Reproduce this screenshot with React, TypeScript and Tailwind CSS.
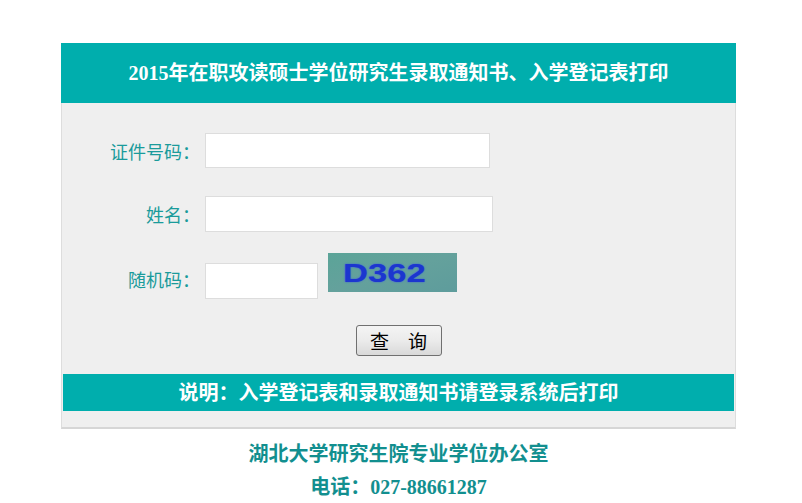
import React from "react";

const serif = { fontFamily: '"Liberation Serif", "Noto Sans CJK SC", serif' };
const sans = { fontFamily: '"Noto Sans CJK SC", "Noto Sans", sans-serif' };

function Row({ label, children, className = "" }: { label: string; children: React.ReactNode; className?: string }) {
  return (
    <div className={`flex ${className}`}>
      <div className="w-[137px] shrink-0 flex justify-end items-center text-[18px] leading-none text-[#1a9b9b]" style={sans}>
        {label}
      </div>
      <div className="ml-[5px] flex">{children}</div>
    </div>
  );
}

export default function App() {
  return (
    <div className="w-[802px] h-[503px] bg-white overflow-hidden">
      <div className="pt-[43px] ml-[61px] w-[675px]">
        <div
          className="h-[60px] bg-[#00aead] flex items-center justify-center text-white text-[20px] font-bold"
          style={serif}
        >
          2015年在职攻读硕士学位研究生录取通知书、入学登记表打印
        </div>
        <div className="bg-[#efefef] border-x border-b-2 border-x-[#dddddd] border-b-[#d6d6d6] px-px pt-[30px] pb-[16px]">
          <Row label="证件号码：" className="h-[35px]">
            <input className="w-[285px] h-[35px] bg-white border border-[#dddddd] outline-none" />
          </Row>
          <Row label="姓名：" className="h-[36px] mt-[28px]">
            <input className="w-[288px] h-[36px] bg-white border border-[#dddddd] outline-none" />
          </Row>
          <div className="flex mt-[21px] h-[46px]">
            <div
              className="w-[137px] shrink-0 flex justify-end items-center pt-[6px] text-[18px] leading-none text-[#1a9b9b]"
              style={sans}
            >
              随机码：
            </div>
            <input className="ml-[5px] mt-[10px] w-[113px] h-[36px] bg-white border border-[#dddddd] outline-none" />
            <div className="ml-[10px] w-[129px] h-[39px] bg-gradient-to-br from-[#5ba498] via-[#64a19c] to-[#5e9c9c] flex items-center pl-[15px]">
              <span
                className="inline-block origin-left scale-x-[1.33] text-[26px] font-bold leading-none text-[#1c36cf]"
                style={{ fontFamily: '"Liberation Sans", Arial, sans-serif', textShadow: "0 0 1.5px #3050e8" }}
              >
                D362
              </span>
            </div>
          </div>
          <div className="flex justify-center mt-[26px]">
            <button
              className="w-[86px] h-[31px] rounded-[3px] border border-[#707070] bg-gradient-to-b from-[#f4f4f4] via-[#ebebeb] to-[#d9d9d9] text-[19px] leading-none text-black"
              style={sans}
            >
              查　询
            </button>
          </div>
          <div
            className="mt-[18px] h-[37px] bg-[#00aead] flex items-center justify-center text-white text-[20px] font-bold"
            style={serif}
          >
            说明：入学登记表和录取通知书请登录系统后打印
          </div>
        </div>
        <div className="flex flex-col items-center text-[20px] font-bold text-[#128f8f] leading-none" style={serif}>
          <div className="mt-[15px]">湖北大学研究生院专业学位办公室</div>
          <div className="mt-[13px]">电话：027-88661287</div>
        </div>
      </div>
    </div>
  );
}
